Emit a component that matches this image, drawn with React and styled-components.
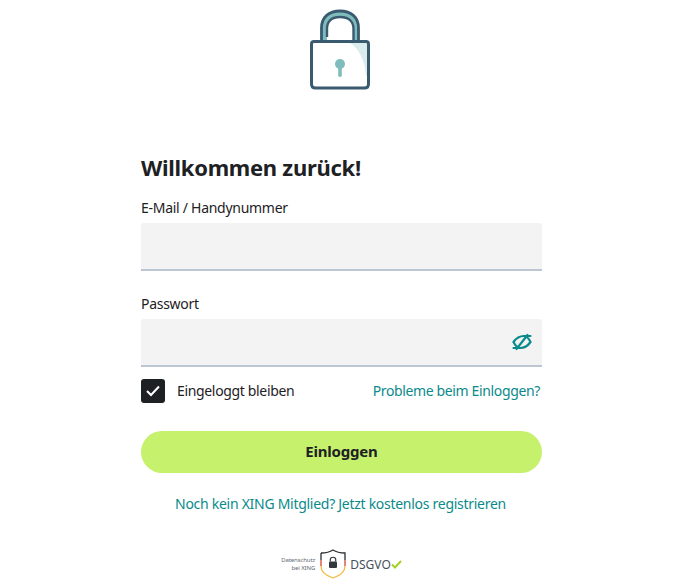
import React from "react";
import styled, { createGlobalStyle } from "styled-components";

const Global = createGlobalStyle`
    html, body {
        margin: 0;
        padding: 0;
        background: #fff;
        overflow: hidden;
    }
`;

const Page = styled.div`
    width: 680px;
    height: 580px;
    overflow: hidden;
    display: flex;
    flex-direction: column;
    align-items: center;
    font-family: "Noto Sans", "Liberation Sans", sans-serif;
    color: #1d2124;
`;

const LockWrap = styled.div`
    height: 82px;
    padding-top: 9px;
    margin-bottom: 62px;
    display: flex;
    justify-content: center;
`;

const Form = styled.form`
    width: 401px;
    margin-left: 3px;
    display: flex;
    flex-direction: column;
`;

const Title = styled.h1`
    margin: 0 0 18px;
    font-size: 22px;
    line-height: 28px;
    font-weight: 700;
    letter-spacing: -0.28px;
    white-space: nowrap;
`;

const Field = styled.div`
    display: flex;
    flex-direction: column;
    margin-bottom: 24px;
`;

const Label = styled.label`
    font-size: 14px;
    line-height: 18px;
    letter-spacing: -0.28px;
    margin-bottom: 6px;
`;

const InputBox = styled.div`
    height: 46px;
    background: #f3f3f3;
    border-bottom: 2px solid #bcc6d2;
    border-radius: 3px 3px 0 0;
    display: flex;
    align-items: center;
    justify-content: flex-end;
    padding-right: 10px;
`;

const OptionsRow = styled.div`
    display: flex;
    align-items: center;
    justify-content: space-between;
    margin-top: -12px;
    margin-bottom: 28px;
`;

const CheckLabel = styled.div`
    display: flex;
    align-items: center;
    gap: 12px;
    font-size: 14px;
    letter-spacing: -0.34px;
`;

const CheckText = styled.span`
    margin-top: -2px;
`;

const CheckBox = styled.span`
    width: 24px;
    height: 24px;
    background: #1d2124;
    border-radius: 3px;
    display: flex;
    align-items: center;
    justify-content: center;
`;

const TealLink = styled.a`
    color: #0a8a8a;
    font-size: 14px;
    letter-spacing: ${(p) => p.$spacing};
    margin-right: 2px;
    margin-top: -2px;
    text-decoration: none;
`;

const Submit = styled.button`
    height: 42px;
    width: 100%;
    border: none;
    border-radius: 21px;
    background: #c6f16d;
    color: #1d2124;
    font-family: inherit;
    font-size: 15px;
    font-weight: 700;
    letter-spacing: -0.2px;
    padding: 0 0 2px;
    margin-bottom: 21px;
`;

const Register = styled.div`
    text-align: center;
    font-size: 14px;
    line-height: 20px;
    margin-bottom: 35px;
`;

const Badge = styled.div`
    display: flex;
    align-items: center;
    justify-content: center;
`;

const BadgeText = styled.div`
    font-size: 6px;
    line-height: 8px;
    letter-spacing: -0.1px;
    text-align: right;
    color: #5f6a72;
    margin-right: 4px;
`;

const BadgeName = styled.span`
    font-size: 12px;
    color: #44505a;
    margin-left: 3px;
`;

const LockIcon = () => (
    <svg width="62" height="82" viewBox="0 0 62 82" fill="none">
        <path d="M38 33 C48 36 56 50 57 67 L59 66 V33 Z" fill="#dcecec" />
        <path d="M15 31 V20 C15 10 21 5 31 5 C41 5 47 10 47 20 V31" stroke="#7fbcbc" strokeWidth="6" />
        <path d="M12.5 31 V19 C12.5 8 20 2 31 2 C42 2 49.5 8 49.5 19 V31" stroke="#3a5a70" strokeWidth="2.8" />
        <path d="M18 28 V20 C18 12 23 8 31 8 C39 8 44.5 12 44.5 20 V31" stroke="#3a5a70" strokeWidth="2.4" />
        <path d="M5 32.5 H57 Q59.5 32.5 59.5 35 V75 Q59.5 79 55.5 79 H6.5 Q2.5 79 2.5 75 V35 Q2.5 32.5 5 32.5 Z" stroke="#3a5a70" strokeWidth="3" />
        <circle cx="31" cy="55" r="5" fill="#7fbcbc" />
        <rect x="29.2" y="57" width="3.6" height="11" rx="1.8" fill="#7fbcbc" />
    </svg>
);

const EyeOffIcon = () => (
    <svg width="20" height="18" viewBox="0 0 20 18" fill="none" stroke="#0a8a8a" strokeWidth="2.2" strokeLinecap="round">
        <path d="M1.5 9 C5 4 9 3 12 3 C15 3 17 6 18.5 9 C15 14 11 15 8 15 C5 15 3 12 1.5 9 Z" />
        <path d="M12 3 H18.5 M8 15 H1.5" />
        <path d="M15.5 2 L4.5 16" />
    </svg>
);

const CheckIcon = () => (
    <svg width="14" height="12" viewBox="0 0 14 12" fill="none" stroke="#fff" strokeWidth="2">
        <path d="M1 6 L5 10 L13 1.5" />
    </svg>
);

const ShieldIcon = () => (
    <svg width="28" height="30" viewBox="0 0 28 30" fill="none">
        <path d="M2 4 C8 4 11 3 14 1 C17 3 20 4 26 4 V11" stroke="#2a2f33" strokeWidth="1.3" />
        <path d="M2 4 V11" stroke="#2a2f33" strokeWidth="1.3" />
        <path d="M2 11 V17 M26 11 V17" stroke="#d8433a" strokeWidth="1.3" />
        <path d="M26 17 C26 23 20 27 14 29 C8 27 2 23 2 17" stroke="#f0b93a" strokeWidth="1.3" />
        <rect x="10" y="12.5" width="8" height="6.5" rx="1" fill="#33383c" />
        <path d="M11.3 12.5 V10.5 C11.3 7.5 16.7 7.5 16.7 10.5 V12.5" stroke="#33383c" strokeWidth="1.2" />
    </svg>
);

const TickIcon = () => (
    <svg width="11" height="9" viewBox="0 0 11 9" fill="none" stroke="#a5d021" strokeWidth="2">
        <path d="M1 4.5 L4 7.5 L10 1" />
    </svg>
);

const App = () => (
    <Page>
        <Global />
        <LockWrap>
            <LockIcon />
        </LockWrap>
        <Form>
            <Title>Willkommen zurück!</Title>
            <Field>
                <Label>E-Mail / Handynummer</Label>
                <InputBox />
            </Field>
            <Field>
                <Label>Passwort</Label>
                <InputBox>
                    <EyeOffIcon />
                </InputBox>
            </Field>
            <OptionsRow>
                <CheckLabel>
                    <CheckBox>
                        <CheckIcon />
                    </CheckBox>
                    <CheckText>Eingeloggt bleiben</CheckText>
                </CheckLabel>
                <TealLink $spacing="-0.36px">Probleme beim Einloggen?</TealLink>
            </OptionsRow>
            <Submit type="button">Einloggen</Submit>
            <Register>
                <TealLink $spacing="-0.28px">Noch kein XING Mitglied? Jetzt kostenlos registrieren</TealLink>
            </Register>
            <Badge>
                <BadgeText>
                    Datenschutz
                    <br />
                    bei XING
                </BadgeText>
                <ShieldIcon />
                <BadgeName>DSGVO</BadgeName>
                <TickIcon />
            </Badge>
        </Form>
    </Page>
);

export default App;
